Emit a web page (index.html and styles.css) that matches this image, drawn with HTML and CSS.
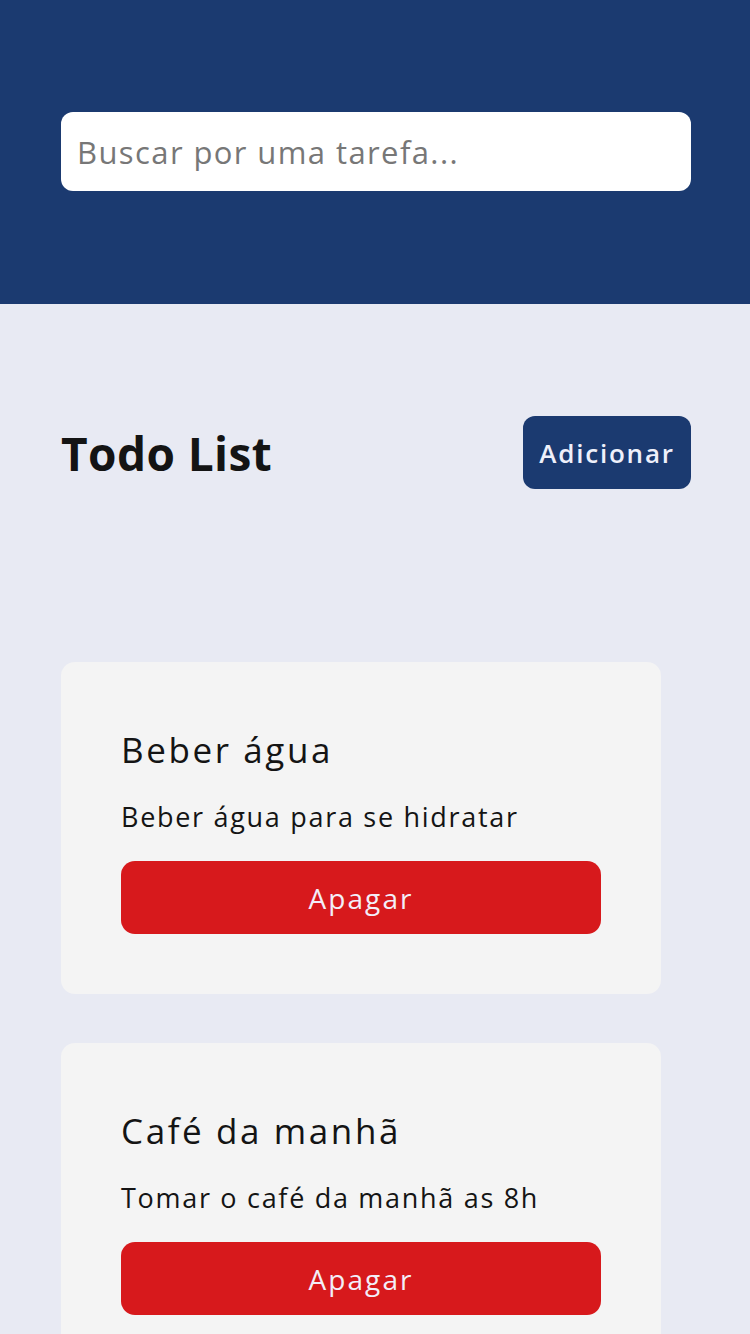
FILE: index.html
```html
<!DOCTYPE html>
<html lang="pt-BR">
<head>
<meta charset="utf-8">
<title>Todo List</title>
<link rel="stylesheet" href="styles.css">
</head>
<body>
<header class="top">
  <input class="search" type="text" placeholder="Buscar por uma tarefa...">
</header>
<main class="content">
  <div class="list-head">
    <h1 class="list-title">Todo List</h1>
    <button class="btn-add">Adicionar</button>
  </div>
  <div class="cards">
    <div class="card">
      <h2 class="card-title">Beber água</h2>
      <p class="card-desc">Beber água para se hidratar</p>
      <button class="btn-del">Apagar</button>
    </div>
    <div class="card">
      <h2 class="card-title">Café da manhã</h2>
      <p class="card-desc">Tomar o café da manhã as 8h</p>
      <button class="btn-del">Apagar</button>
    </div>
  </div>
</main>
</body>
</html>
```
FILE: styles.css
```css
* { box-sizing: border-box; }
html, body { margin: 0; padding: 0; }
body {
  font-family: "Open Sans", "Liberation Sans", sans-serif;
  background: #e8eaf3;
  color: #141414;
}
.top {
  background: #1b3a70;
  height: 304px;
  padding: 112px 59px 0 61px;
}
.search {
  display: block;
  width: 100%;
  height: 79px;
  border: none;
  border-radius: 12px;
  background: #fff;
  padding: 0 16px;
  font-family: inherit;
  font-size: 31px;
  letter-spacing: 1.4px;
  color: #333;
  outline: none;
}
.search::placeholder { color: #777; }
.content {
  padding: 112px 59px 0 61px;
}
.list-head {
  display: flex;
  justify-content: space-between;
  align-items: center;
  height: 73px;
}
.list-title {
  margin: 0;
  font-size: 46px;
  font-weight: 700;
  letter-spacing: 0.4px;
}
.btn-add {
  width: 168px;
  height: 73px;
  border: none;
  border-radius: 12px;
  background: #1b3a70;
  color: #eef0fb;
  font-family: inherit;
  font-size: 26px;
  font-weight: 600;
  letter-spacing: 1.8px;
  padding: 0;
}
.cards {
  margin-top: 173px;
  display: flex;
  flex-direction: column;
  gap: 49px;
}
.card {
  width: 600px;
  background: #f4f4f4;
  border-radius: 14px;
  padding: 60px;
}
.card-title {
  margin: 0;
  font-size: 35px;
  font-weight: 500;
  line-height: 56px;
  letter-spacing: 2.6px;
}
.card-desc {
  margin: 18px 0 0;
  font-size: 27px;
  line-height: 42px;
  letter-spacing: 1.7px;
}
.btn-del {
  display: block;
  width: 100%;
  height: 73px;
  margin-top: 23px;
  border: none;
  border-radius: 14px;
  background: #d7191c;
  color: #f3eef8;
  font-family: inherit;
  font-size: 28px;
  font-weight: 500;
  letter-spacing: 2.1px;
  padding: 0;
}
```
